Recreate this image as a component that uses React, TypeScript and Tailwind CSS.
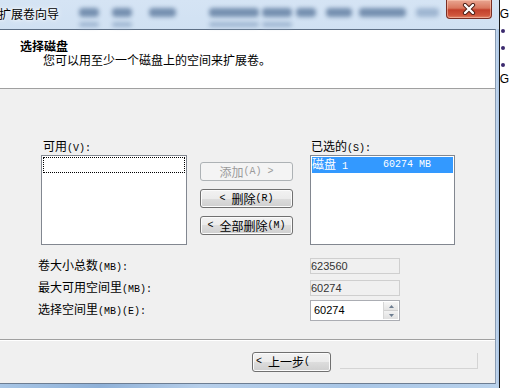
import React from "react";

const M = ({ children }: { children: React.ReactNode }) => (
  <span className="font-['Liberation_Mono',monospace] text-[10px] whitespace-pre">{children}</span>
);

const btn =
  "h-[19px] w-[93px] rounded-[3px] border border-[#707070] bg-[linear-gradient(#f2f2f2,#ebebeb_50%,#dddddd_50%,#cfcfcf)] shadow-[inset_0_0_0_1px_#fbfbfb] flex items-center justify-center text-[12px] leading-[14px] text-black whitespace-pre";

function Blob({ ml, w, faint }: { ml: number; w: number; faint?: boolean }) {
  return (
    <div
      className={`h-full rounded-sm blur-[2px] ${faint ? "bg-[#9fb6d1]" : "bg-[#7690b0]"}`}
      style={{ marginLeft: ml, width: w }}
    />
  );
}

export default function App() {
  return (
    <div className="w-[509px] h-[388px] flex overflow-hidden bg-white font-['Noto_Sans_CJK_SC',sans-serif] text-[12px] text-black">
      {/* window */}
      <div className="w-[503px] h-full flex flex-col bg-[linear-gradient(180deg,#d5e4f4,#bcd3ec_40%,#b0cbe8)]">
        {/* title bar */}
        <div className="h-[29px] flex items-start">
          <div className="w-[70px] h-[29px] flex items-center -ml-[1px] pb-[1px] text-[12px] leading-[14px] text-black [text-shadow:0_0_6px_#ffffff,0_0_3px_#ffffff]">
            扩展卷向导
          </div>
          <div className="flex-1 flex flex-col pt-[8px] gap-[5px]">
            <div className="flex h-[9px]">
              <Blob ml={10} w={20} />
              <Blob ml={13} w={20} />
              <Blob ml={17} w={27} />
              <Blob ml={33} w={50} />
              <Blob ml={3} w={30} />
              <Blob ml={4} w={20} />
              <Blob ml={10} w={26} />
              <Blob ml={7} w={47} />
              <Blob ml={10} w={23} faint />
            </div>
            <div className="flex h-[5px]">
              <Blob ml={10} w={20} faint />
              <Blob ml={13} w={20} faint />
              <Blob ml={77} w={50} faint />
              <Blob ml={3} w={30} faint />
            </div>
          </div>
          <div className="w-[46px] h-[19px] rounded-b-[4px] border border-t-0 border-[#7a2e24] bg-[linear-gradient(180deg,#e9a692,#d9775e_45%,#c2402b_55%,#d0563c_85%,#e0866a)] flex items-center justify-center shadow-[inset_0_0_0_1px_rgba(255,210,190,0.5)]">
            <svg width="14" height="12" viewBox="0 0 14 12">
              <path d="M3 2 L11 10 M11 2 L3 10" stroke="#4a1c14" strokeWidth="4.2" strokeLinecap="round" />
              <path d="M3 2 L11 10 M11 2 L3 10" stroke="#ffffff" strokeWidth="2.4" strokeLinecap="round" />
            </svg>
          </div>
          <div className="w-[7px]" />
        </div>

        {/* client + right frame */}
        <div className="flex h-[355px]">
          <div className="w-[496px] h-full flex flex-col border-t border-b border-r border-t-[#5d6f85] border-b-[#6c7d92] border-r-[#8a9cb2] bg-[#f0f0f0]">
            {/* header */}
            <div className="h-[59px] bg-white border-b border-[#a0a0a0] pt-[9px] pl-[20px] leading-[14px]">
              <div className="font-bold">选择磁盘</div>
              <div className="pl-[23px]">您可以用至少一个磁盘上的空间来扩展卷。</div>
            </div>

            {/* body */}
            <div className="h-[251px] border-b border-[#a0a0a0] pt-[50px]">
              <div className="flex">
                <div className="ml-[41px] w-[146px]">
                  <div className="pl-[2px] h-[16px] leading-[14px]">
                    可用<M>(V):</M>
                  </div>
                  <div className="h-[90px] border border-[#828790] bg-white p-[1px]">
                    <div className="h-[16px] border border-dotted border-black" />
                  </div>
                </div>
                <div className="ml-[13px] w-[93px] pt-[23px] flex flex-col gap-[8px]">
                  <div className="h-[19px] w-[93px] rounded-[3px] border border-[#adb2b5] bg-[#f4f4f4] flex items-center justify-center leading-[14px] text-[#9a9a9a] whitespace-pre">
                    添加<M>(A) &gt;</M>
                  </div>
                  <div className={btn}>
                    <M>{"< "}</M>删除<M>(R)</M>
                  </div>
                  <div className={btn}>
                    <M>{"< "}</M>全部删除<M>(M)</M>
                  </div>
                </div>
                <div className="ml-[17px] w-[145px]">
                  <div className="pl-[1px] h-[16px] leading-[14px]">
                    已选的<M>(S):</M>
                  </div>
                  <div className="h-[90px] border border-[#828790] bg-white p-[1px]">
                    <div className="h-[16px] bg-[#3399ff] text-white flex items-center leading-[14px]">
                      <span className="w-[71px] whitespace-pre">
                        磁盘<M> 1</M>
                      </span>
                      <M>60274 MB</M>
                    </div>
                  </div>
                </div>
              </div>

              {/* fields */}
              <div className="mt-[13px] flex items-center h-[16px]">
                <div className="ml-[38px] w-[272px] leading-[14px]">
                  卷大小总数<M>(MB):</M>
                </div>
                <div className="w-[90px] h-[16px] border border-[#cfcfcf] bg-[#f0f0f0] flex items-center font-['Liberation_Sans',sans-serif] text-[11px] text-[#333] leading-none">
                  623560
                </div>
              </div>
              <div className="mt-[6px] flex items-center h-[16px]">
                <div className="ml-[38px] w-[272px] leading-[14px]">
                  最大可用空间里<M>(MB):</M>
                </div>
                <div className="w-[90px] h-[16px] border border-[#cfcfcf] bg-[#f0f0f0] flex items-center font-['Liberation_Sans',sans-serif] text-[11px] text-[#333] leading-none">
                  60274
                </div>
              </div>
              <div className="mt-[4px] flex items-center h-[21px]">
                <div className="ml-[38px] w-[272px] leading-[14px]">
                  选择空间里<M>(MB)(E):</M>
                </div>
                <div className="w-[90px] h-[21px] border border-[#abadb3] bg-white flex items-stretch">
                  <div className="flex-1 flex items-center pl-[3px] font-['Liberation_Sans',sans-serif] text-[11px] text-black leading-none">
                    60274
                  </div>
                  <div className="w-[15px] flex flex-col border-l border-[#d6d6d6] my-[1px] mr-[1px]">
                    <div className="flex-1 flex items-center justify-center border-b border-[#d0d0d0] bg-[linear-gradient(#f6f6f6,#e4e4e4)]">
                      <svg width="5" height="3" viewBox="0 0 5 3"><path d="M2.5 0 L5 3 L0 3 Z" fill="#6d7d90" /></svg>
                    </div>
                    <div className="flex-1 flex items-center justify-center bg-[linear-gradient(#f2f2f2,#e0e0e0)]">
                      <svg width="5" height="3" viewBox="0 0 5 3"><path d="M0 0 L5 0 L2.5 3 Z" fill="#6d7d90" /></svg>
                    </div>
                  </div>
                </div>
              </div>
            </div>

            {/* footer */}
            <div className="h-[43px] border-t border-white pt-[11px] flex items-start">
              <div className="ml-[252px] w-[79px] h-[20px] rounded-[3px] border border-[#707070] bg-[linear-gradient(#f2f2f2,#ebebeb_50%,#dddddd_50%,#cfcfcf)] shadow-[inset_0_0_0_1px_#fbfbfb] flex items-center pl-[3px] leading-[14px] whitespace-pre">
                <M>{"< "}</M>上一步<M>(</M>
              </div>
              <div className="ml-[9px] mt-[1px] w-[138px] h-[16px] border-b border-r border-[#d4d4d4]" />
            </div>
          </div>
          <div className="flex-1 h-full bg-[linear-gradient(90deg,#c4d8ee,#a9c5e5)]" />
        </div>
        {/* bottom frame */}
        <div className="flex-1 bg-[linear-gradient(90deg,#a8c6e6,#8fb1d8_20%,#b7cfea_40%,#a9c6e6_70%,#b9d2ec)]" />
      </div>
      <div className="w-px h-full bg-[#1a1a1a]" />
      {/* background window strip */}
      <div className="flex-1 h-full bg-white flex flex-col text-[12px] leading-[14px]">
        <div className="mt-[7px] font-['Liberation_Sans',sans-serif]">G</div>
        <div className="mt-[8px] ml-[1px] w-[4px] h-[4px] rounded-full bg-[#3b2a6e]" />
        <div className="mt-[13px] ml-[1px] w-[4px] h-[4px] rounded-full bg-[#3b2a6e]" />
        <div className="mt-[13px] ml-[1px] w-[4px] h-[4px] rounded-full bg-[#3b2a6e]" />
        <div className="mt-[5px] font-['Liberation_Sans',sans-serif]">G</div>
      </div>
    </div>
  );
}
